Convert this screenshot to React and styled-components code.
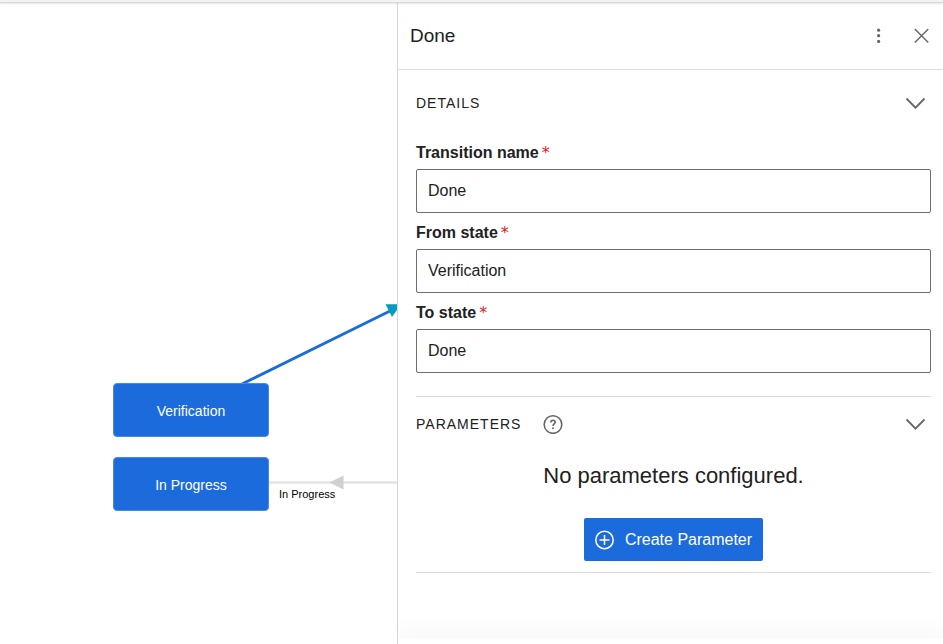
import React from 'react';
import styled, { createGlobalStyle } from 'styled-components';

const GlobalStyle = createGlobalStyle`
	* {
		box-sizing: border-box;
	}

	body {
		margin: 0;
		background: #fff;
		color: #212121;
		font-family: 'Liberation Sans', Arial, sans-serif;
	}
`;

const Page = styled.div`
	height: 100vh;
	display: flex;
	flex-direction: column;
`;

const TopBar = styled.div`
	flex: none;
	height: 3px;
	background: #f3f3f3;
	border-bottom: 1px solid #d8d8d8;
	box-shadow: 0 1px 2px rgba(0, 0, 0, 0.1);
	z-index: 1;
`;

const Workspace = styled.div`
	flex: 1;
	min-height: 0;
	display: flex;
`;

const Canvas = styled.main`
	position: relative;
	flex: 0 0 397px;
	overflow: hidden;
`;

const Edges = styled.svg`
	position: absolute;
	top: 0;
	left: 0;
`;

const StateNode = styled.div`
	position: absolute;
	left: ${props => props.$x}px;
	top: ${props => props.$y}px;
	width: 156px;
	height: 54px;
	display: flex;
	align-items: center;
	justify-content: center;
	padding-top: 2px;
	border: 1px solid #4a8ae6;
	border-radius: 4px;
	background: #1c6bdd;
	color: #fff;
	font-size: 14px;
`;

const EdgeLabel = styled.span`
	position: absolute;
	left: ${props => props.$x}px;
	top: ${props => props.$y}px;
	color: #000;
	font-size: 11px;
	line-height: 14px;
`;

const Panel = styled.aside`
	flex: 1;
	min-width: 0;
	display: flex;
	flex-direction: column;
	overflow: hidden;
	border-left: 1px solid #d8d8d8;
	background: #fff;
`;

const PanelHeader = styled.header`
	flex: none;
	display: flex;
	align-items: center;
	justify-content: space-between;
	height: 67px;
	padding: 0 12px;
	border-bottom: 1px solid #dcdcdc;
`;

const Title = styled.h1`
	margin: 0;
	font-size: 19px;
	font-weight: 400;
	line-height: 24px;
`;

const Actions = styled.div`
	display: flex;
	gap: 24px;
`;

const IconButton = styled.button`
	display: flex;
	padding: 0;
	border: 0;
	background: none;
	color: #666;
	cursor: pointer;
`;

const PanelBody = styled.div`
	flex: 1;
	min-height: 0;
	overflow: auto;
	padding: 6px 12px 0 18px;
`;

const PanelFooter = styled.footer`
	flex: none;
	height: 6px;
	background: #fff;
	box-shadow: 0 0 24px rgba(0, 0, 0, 0.12);
`;

const Section = styled.section`
	border-bottom: 1px solid #dcdcdc;
`;

const SectionHeader = styled.div`
	display: flex;
	align-items: center;
	justify-content: space-between;
	height: 54px;
	padding-right: 5px;
`;

const SectionHeading = styled.div`
	display: flex;
	align-items: center;
	gap: 22px;
`;

const SectionTitle = styled.h2`
	margin: 0;
	font-size: 14px;
	font-weight: 400;
	line-height: 20px;
	letter-spacing: 1px;
	text-transform: uppercase;
`;

const Fields = styled.form`
	display: grid;
	gap: 8px;
	padding: 11px 0 23px;
`;

const Field = styled.div`
	display: grid;
	gap: 4px;
`;

const Label = styled.label`
	display: flex;
	gap: 3px;
	font-size: 16px;
	font-weight: 700;
	line-height: 24px;
`;

const Required = styled.span`
	color: #e02020;
	font-family: 'DejaVu Sans', sans-serif;
	font-weight: 400;
`;

const Input = styled.input`
	width: 100%;
	height: 44px;
	padding: 0 11px;
	border: 1px solid #6e6e6e;
	border-radius: 2px;
	background: #fff;
	color: #212121;
	font: inherit;
	font-size: 16px;
`;

const Empty = styled.div`
	display: flex;
	flex-direction: column;
	align-items: center;
	gap: 26px;
	padding: 9px 0 11px;
`;

const EmptyText = styled.p`
	margin: 0;
	font-size: 22px;
	line-height: 32px;
`;

const PrimaryButton = styled.button`
	display: flex;
	align-items: center;
	gap: 11px;
	height: 43px;
	padding: 0 11px;
	border: 0;
	border-radius: 2px;
	background: #1c6bdd;
	color: #fff;
	font: inherit;
	font-size: 16px;
	cursor: pointer;
`;

const fields = [
	{ id: 'transition-name', label: 'Transition name', value: 'Done' },
	{ id: 'from-state', label: 'From state', value: 'Verification' },
	{ id: 'to-state', label: 'To state', value: 'Done' },
];

const ChevronIcon = () => (
	<svg width='21' height='14' fill='none' stroke='currentColor' strokeWidth='1.8'>
		<path d='M1.5 2.5L10.5 11.7L19.5 2.5' />
	</svg>
);

const HelpIcon = () => (
	<svg width='20' height='20' fill='none' stroke='currentColor'>
		<circle cx='10' cy='10.5' r='8.8' strokeWidth='1.6' />
		<path d='M7.8 8.6C7.8 7.1 8.7 6.3 10 6.3C11.3 6.3 12.2 7.1 12.2 8.3C12.2 9.9 10 9.9 10 11.9' strokeWidth='1.6' />
		<circle cx='10' cy='14.2' r='1' fill='currentColor' stroke='none' />
	</svg>
);

const PlusCircleIcon = () => (
	<svg width='19' height='20' fill='none' stroke='currentColor' strokeWidth='1.5'>
		<circle cx='9.5' cy='10' r='8.7' />
		<path d='M9.5 5V15M4.5 10H14.5' />
	</svg>
);

function Diagram() {
	return (
		<Canvas>
			<Edges width='420' height='641'>
				<path d='M242 381L391 307.5' stroke='#1c6bdd' strokeWidth='2.8' />
				<path d='M385.5 301.3H401L392 314Z' fill='#069bbf' />
				<path d='M269 479.5H397' stroke='#e3e3e3' strokeWidth='2.4' />
				<path d='M329.5 479.5L343.5 472.5V486.5Z' fill='#d0d0d0' />
			</Edges>
			<StateNode $x={113} $y={380}>Verification</StateNode>
			<StateNode $x={113} $y={454}>In Progress</StateNode>
			<EdgeLabel $x={279} $y={484}>In Progress</EdgeLabel>
		</Canvas>
	);
}

export default function App() {
	return (
		<Page>
			<GlobalStyle />
			<TopBar />
			<Workspace>
				<Diagram />
				<Panel>
					<PanelHeader>
						<Title>Done</Title>
						<Actions>
							<IconButton type='button' aria-label='More actions'>
								<svg width='18' height='18' fill='currentColor'>
									<circle cx='7.6' cy='3.2' r='1.6' />
									<circle cx='7.6' cy='8.7' r='1.6' />
									<circle cx='7.6' cy='14.4' r='1.6' />
								</svg>
							</IconButton>
							<IconButton type='button' aria-label='Close'>
								<svg width='18' height='18' fill='none' stroke='currentColor' strokeWidth='1.4'>
									<path d='M1.8 2L15.3 15.5M15.3 2L1.8 15.5' />
								</svg>
							</IconButton>
						</Actions>
					</PanelHeader>
					<PanelBody>
						<Section>
							<SectionHeader>
								<SectionTitle>Details</SectionTitle>
								<IconButton type='button' aria-label='Toggle details'>
									<ChevronIcon />
								</IconButton>
							</SectionHeader>
							<Fields>
								{fields.map(field => (
									<Field key={field.id}>
										<Label htmlFor={field.id}>
											{field.label} <Required>*</Required>
										</Label>
										<Input id={field.id} type='text' defaultValue={field.value} />
									</Field>
								))}
							</Fields>
						</Section>
						<Section>
							<SectionHeader>
								<SectionHeading>
									<SectionTitle>Parameters</SectionTitle>
									<IconButton type='button' aria-label='Help'>
										<HelpIcon />
									</IconButton>
								</SectionHeading>
								<IconButton type='button' aria-label='Toggle parameters'>
									<ChevronIcon />
								</IconButton>
							</SectionHeader>
							<Empty>
								<EmptyText>No parameters configured.</EmptyText>
								<PrimaryButton type='button'>
									<PlusCircleIcon />
									Create Parameter
								</PrimaryButton>
							</Empty>
						</Section>
					</PanelBody>
					<PanelFooter />
				</Panel>
			</Workspace>
		</Page>
	);
}
